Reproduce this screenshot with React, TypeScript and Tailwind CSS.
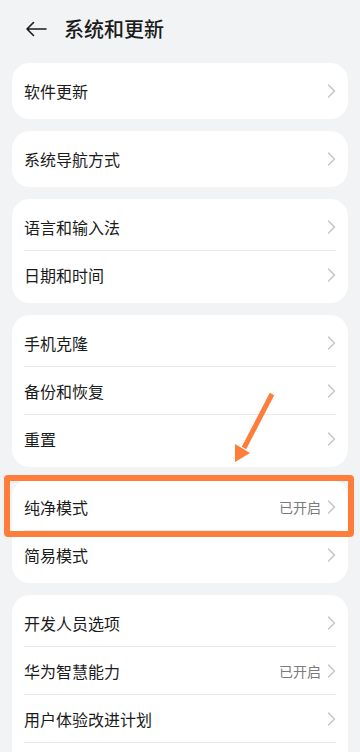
import React from 'react';

type Item = { label: string; value?: string };

const groups: Item[][] = [
  [{ label: '软件更新' }],
  [{ label: '系统导航方式' }],
  [{ label: '语言和输入法' }, { label: '日期和时间' }],
  [{ label: '手机克隆' }, { label: '备份和恢复' }, { label: '重置' }],
  [{ label: '纯净模式', value: '已开启' }, { label: '简易模式' }],
  [
    { label: '开发人员选项' },
    { label: '华为智慧能力', value: '已开启' },
    { label: '用户体验改进计划' },
    { label: '' },
  ],
];

function Chevron() {
  return (
    <svg width="9" height="16" viewBox="0 0 9 16" className="ml-1.5 shrink-0">
      <path d="M1.5 2 L7.5 8 L1.5 14" fill="none" stroke="#c4c4c6" strokeWidth="1.4" strokeLinecap="round" strokeLinejoin="round" />
    </svg>
  );
}

function Row({ item, last }: { item: Item; last: boolean }) {
  return (
    <div className="relative flex h-12 items-center justify-between">
      <span className="text-[16px] text-[#1b1b1b]">{item.label}</span>
      {item.label && (
        <div className="flex items-center">
          {item.value && <span className="text-[14px] text-[#7b7b7b]">{item.value}</span>}
          <Chevron />
        </div>
      )}
      {!last && <div className="absolute bottom-0 left-0 right-0 h-px bg-[#e9e9eb]" />}
    </div>
  );
}

export default function App() {
  return (
    <div
      className="relative h-[752px] w-[360px] overflow-hidden bg-[#f1f3f5]"
      style={{ fontFamily: '"Noto Sans CJK SC", "Noto Sans", sans-serif' }}
    >
      <div className="flex h-[58px] items-center pl-6">
        <svg width="24" height="24" viewBox="0 0 24 24" className="shrink-0">
          <path d="M22 12 H3 M9.5 5.5 L3 12 L9.5 18.5" fill="none" stroke="#1b1b1b" strokeWidth="1.6" strokeLinecap="round" strokeLinejoin="round" />
        </svg>
        <h1 className="ml-4 text-[20px] font-medium text-[#1b1b1b]">系统和更新</h1>
      </div>

      <div className="flex flex-col gap-3 px-3 pt-[5px]">
        {groups.map((g, i) => (
          <div key={i} className="rounded-[18px] bg-white px-3 py-1">
            {g.map((item, j) => (
              <Row key={j} item={item} last={j === g.length - 1} />
            ))}
          </div>
        ))}
      </div>

      {/* annotation */}
      <div className="absolute left-1 top-[475px] h-[62px] w-[350px] rounded-[4px] border-[6px] border-[#ff7d3b]" />
      <svg className="absolute left-[228px] top-[388px]" width="52" height="80" viewBox="0 0 52 80">
        <path d="M44 6 L16 60" stroke="#ff7d3b" strokeWidth="5" strokeLinecap="butt" />
        <path d="M7 74 L7 56 L22 65 Z" fill="#ff7d3b" />
      </svg>
    </div>
  );
}
